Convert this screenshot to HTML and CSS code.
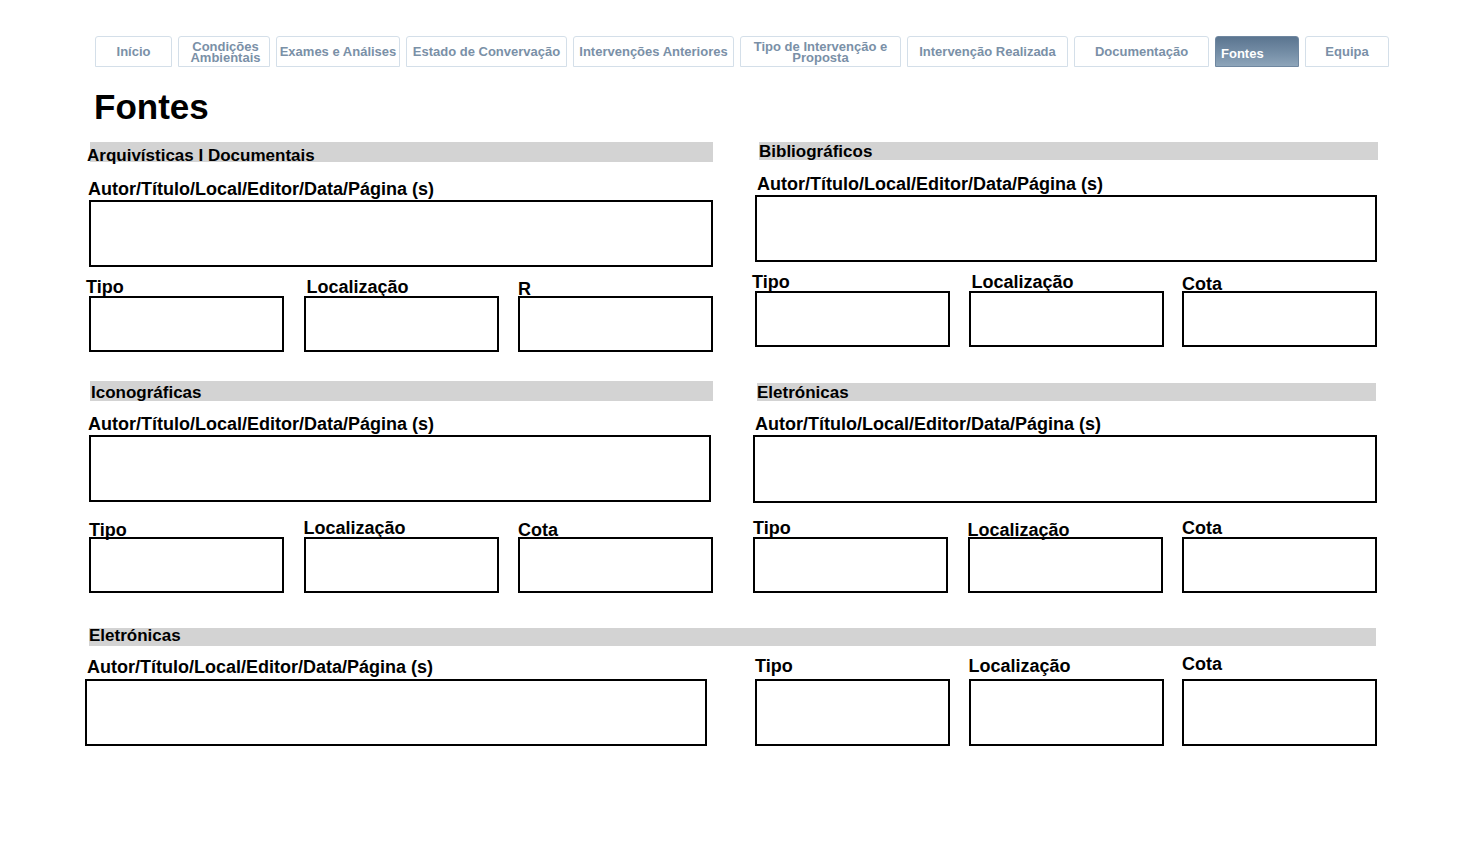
FILE: index.html
```html
<!DOCTYPE html>
<html lang="pt">
<head>
<meta charset="utf-8">
<title>Fontes</title>
<link rel="stylesheet" href="styles.css">
</head>
<body>
<div class="page">
  <nav class="tabs">
    <a class="tab w-inicio">Início</a>
    <a class="tab w-cond">Condições<br>Ambientais</a>
    <a class="tab w-exames">Exames e Análises</a>
    <a class="tab w-wide">Estado de Convervação</a>
    <a class="tab w-wide">Intervenções Anteriores</a>
    <a class="tab w-wide">Tipo de Intervenção e<br>Proposta</a>
    <a class="tab w-wide">Intervenção Realizada</a>
    <a class="tab w-doc">Documentação</a>
    <a class="tab w-small active">Fontes</a>
    <a class="tab w-small">Equipa</a>
  </nav>

  <h1 class="title">Fontes</h1>

  <div class="sources">
    <section class="src src-arq">
      <div class="bar">Arquivísticas I Documentais</div>
      <div class="label">Autor/Título/Local/Editor/Data/Página (s)</div>
      <div class="box big"></div>
      <div class="trio">
        <div class="cell"><div class="slabel shift-l">Tipo</div><div class="box small"></div></div>
        <div class="cell"><div class="slabel shift-r">Localização</div><div class="box small"></div></div>
        <div class="cell"><div class="slabel low">R</div><div class="box small"></div></div>
      </div>
    </section>

    <section class="src src-bib">
      <div class="bar">Bibliográficos</div>
      <div class="label">Autor/Título/Local/Editor/Data/Página (s)</div>
      <div class="box big"></div>
      <div class="trio">
        <div class="cell"><div class="slabel shift-l">Tipo</div><div class="box small"></div></div>
        <div class="cell"><div class="slabel shift-r">Localização</div><div class="box small"></div></div>
        <div class="cell"><div class="slabel low">Cota</div><div class="box small"></div></div>
      </div>
    </section>

    <section class="src src-ico">
      <div class="bar">Iconográficas</div>
      <div class="label">Autor/Título/Local/Editor/Data/Página (s)</div>
      <div class="box big"></div>
      <div class="trio">
        <div class="cell"><div class="slabel low">Tipo</div><div class="box small"></div></div>
        <div class="cell"><div class="slabel">Localização</div><div class="box small"></div></div>
        <div class="cell"><div class="slabel low">Cota</div><div class="box small"></div></div>
      </div>
    </section>

    <section class="src src-ele">
      <div class="bar">Eletrónicas</div>
      <div class="label">Autor/Título/Local/Editor/Data/Página (s)</div>
      <div class="box big"></div>
      <div class="trio">
        <div class="cell"><div class="slabel">Tipo</div><div class="box small"></div></div>
        <div class="cell"><div class="slabel low">Localização</div><div class="box small"></div></div>
        <div class="cell"><div class="slabel">Cota</div><div class="box small"></div></div>
      </div>
    </section>

    <section class="src src-wide">
      <div class="bar">Eletrónicas</div>
      <div class="main-part">
        <div class="label">Autor/Título/Local/Editor/Data/Página (s)</div>
        <div class="box big"></div>
      </div>
      <div class="trio">
        <div class="cell"><div class="slabel">Tipo</div><div class="box small"></div></div>
        <div class="cell"><div class="slabel">Localização</div><div class="box small"></div></div>
        <div class="cell"><div class="slabel high">Cota</div><div class="box small"></div></div>
      </div>
    </section>
  </div>
</div>
</body>
</html>
```

FILE: styles.css
```css
html, body {
  margin: 0;
  padding: 0;
  background: #ffffff;
  font-family: "Liberation Sans", Arial, sans-serif;
  color: #000;
}

.page {
  padding-top: 36px;
}

/* ---------- tabs ---------- */
.tabs {
  display: flex;
  gap: 6px;
  margin-left: 95px;
}

.tab {
  box-sizing: border-box;
  height: 31px;
  display: flex;
  align-items: center;
  justify-content: center;
  text-align: center;
  border: 1px solid #d4dfe9;
  border-radius: 3px 3px 0 0;
  font-size: 13px;
  font-weight: 700;
  line-height: 11px;
  color: #7a90a7;
  text-decoration: none;
  background: #fff;
}

.w-inicio { width: 77px; }
.w-cond { width: 92px; padding-left: 3px; }
.w-exames { width: 124px; }
.w-wide { width: 161px; }
.w-doc { width: 135px; }
.w-small { width: 84px; }

.tab.active {
  justify-content: flex-start;
  padding: 3px 0 0 5px;
  color: #ffffff;
  border-color: #6f87a0;
  background: linear-gradient(to bottom, #5b7590 0%, #7790a8 60%, #8ea5ba 100%);
}

/* ---------- title ---------- */
.title {
  margin: 21px 0 0 94px;
  font-size: 35px;
  line-height: 38px;
  font-weight: 700;
}

/* ---------- grid of sources ---------- */
.sources {
  display: grid;
  grid-template-columns: 624px 622px;
  column-gap: 42px;
  row-gap: 29px;
  margin: 16px 0 0 89px;
  align-items: start;
}

.bar {
  height: 20px;
  line-height: 24px;
  background: #d3d3d3;
  font-size: 17px;
  font-weight: 700;
  white-space: nowrap;
  margin-left: 1px;
  text-indent: -3px;
}

.label {
  margin: 17px 0 0 -1px;
  font-size: 18px;
  font-weight: 700;
  line-height: 20px;
  white-space: nowrap;
}

.box {
  box-sizing: border-box;
  border: 2px solid #000;
  background: #fff;
}

.big {
  height: 67px;
  margin-top: 1px;
}

.trio {
  display: grid;
  grid-template-columns: repeat(3, 195px);
  justify-content: space-between;
  margin-top: 11px;
}

.slabel {
  font-size: 18px;
  font-weight: 700;
  line-height: 18px;
  white-space: nowrap;
}

.slabel.shift-l { margin-left: -3px; }
.slabel.shift-r { margin-left: 3px; }
.slabel.low { padding-top: 2px; margin-bottom: -2px; }
.slabel.high { margin-top: -2px; padding-bottom: 2px; }

.small {
  height: 56px;
}

/* Arquivísticas */
.src-arq .bar {
  line-height: 28px;
}

/* Bibliográficos */
.src-bib .bar {
  height: 18px;
  line-height: 20px;
  margin: 0 -1px 0 4px;
  text-indent: 0;
}
.src-bib .label {
  margin-top: 14px;
  margin-left: 2px;
}

/* Iconográficas */
.src-ico .bar {
  text-indent: 1px;
}
.src-ico .label {
  margin-top: 13px;
}
.src-ico .big {
  width: 622px;
}
.src-ico .trio {
  margin-top: 17px;
}

/* Eletrónicas (right) */
.src-ele {
  margin-top: 2px;
  margin-left: -2px;
}
.src-ele .bar {
  height: 18px;
  line-height: 20px;
  margin: 0 1px 0 4px;
  text-indent: 0;
}
.src-ele .label {
  margin-top: 13px;
  margin-left: 2px;
}
.src-ele .big {
  height: 68px;
}
.src-ele .trio {
  margin-top: 16px;
}

/* Eletrónicas (wide) */
.src-wide {
  grid-column: 1 / -1;
  display: grid;
  grid-template-columns: 624px 622px;
  column-gap: 42px;
  margin-top: 6px;
  align-items: start;
}
.src-wide .bar {
  grid-column: 1 / -1;
  height: 18px;
  line-height: 16px;
  margin: 0 1px 0 0;
  text-indent: 0;
}
.src-wide .main-part {
  margin-left: -4px;
  width: 622px;
}
.src-wide .label {
  margin-top: 11px;
  margin-left: 2px;
}
.src-wide .big {
  margin-top: 2px;
}
.src-wide .trio {
  margin-top: 11px;
}
.src-wide .slabel {
  margin-bottom: 4px;
}
.src-wide .slabel.high {
  margin-bottom: 4px;
}
.src-wide .small {
  height: 67px;
}
```
